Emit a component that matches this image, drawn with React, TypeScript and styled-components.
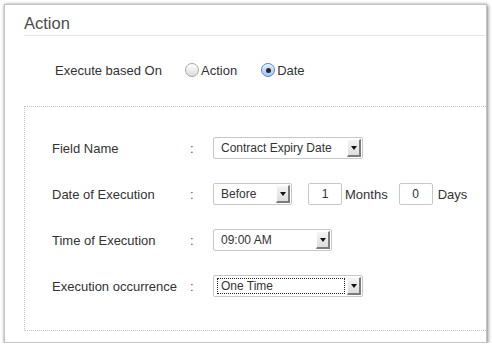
import React from 'react';
import styled, { createGlobalStyle } from 'styled-components';

const GlobalStyle = createGlobalStyle`
    body {
        margin: 0;
        background: #ffffff;
        font-family: "Liberation Sans", Arial, sans-serif;
    }
`;

const Card = styled.div`
    box-sizing: border-box;
    width: 483px;
    height: 339px;
    margin: 4px 0 0 4px;
    background: #fff;
    border: 1px solid #c4c4c4;
    box-shadow: 1px 1px 4px rgba(0, 0, 0, 0.45), 0 0 2px rgba(0, 0, 0, 0.2);
`;

const Header = styled.div`
    margin-left: 19px;
    padding: 8px 0 2px 0;
    line-height: 20px;
    font-size: 16.5px;
    color: #4d4d4d;
    border-bottom: 1px solid #e6e6e6;
`;

const BasedOnRow = styled.div`
    display: flex;
    align-items: center;
    height: 20px;
    margin: 24px 0 0 50px;
    font-size: 13px;
    color: #333;
`;

const BasedOnLabel = styled.span`
    width: 130px;
`;

const RadioGroup = styled.div`
    display: flex;
    align-items: center;
    gap: 24px;
`;

const RadioOption = styled.label`
    display: flex;
    align-items: center;
    gap: 2px;
`;

const RadioDot = styled.span<{ $checked?: boolean }>`
    box-sizing: border-box;
    width: 14px;
    height: 14px;
    border-radius: 50%;
    display: flex;
    align-items: center;
    justify-content: center;
    border: 1px solid ${(p) => (p.$checked ? '#4f86d4' : '#a6a6a6')};
    background: ${(p) =>
        p.$checked
            ? 'linear-gradient(#dbe9fb, #a9c9f2)'
            : 'linear-gradient(#ffffff, #dcdcdc)'};
    box-shadow: inset 0 1px 1px rgba(255, 255, 255, 0.8);

    &::after {
        content: '';
        display: ${(p) => (p.$checked ? 'block' : 'none')};
        width: 5px;
        height: 5px;
        border-radius: 50%;
        background: #1f2a3a;
    }
`;

const DetailsBox = styled.div`
    margin: 26px 0 0 19px;
    padding: 18px 0 21px 27px;
    border: 1px dotted #c6c6c6;
    border-right: none;
`;

const FieldRow = styled.div`
    display: grid;
    grid-template-columns: 136px 25px auto;
    align-items: center;
    height: 46px;
    font-size: 13px;
    color: #333;
`;

const Colon = styled.span`
    padding-left: 2px;
    color: #555;
`;

const Controls = styled.div`
    display: flex;
    align-items: center;
`;

const SelectBox = styled.div<{ $width: number }>`
    box-sizing: border-box;
    width: ${(p) => p.$width}px;
    height: 22px;
    display: flex;
    align-items: center;
    padding: 0 1px 0 3px;
    border: 1px solid #c8c8c8;
    border-radius: 2px;
    background: #fff;
`;

const SelectValue = styled.span<{ $focused?: boolean }>`
    flex: 1;
    height: 16px;
    line-height: 16px;
    padding-left: 4px;
    margin-right: 2px;
    font-size: 12px;
    color: #333;
    outline: ${(p) => (p.$focused ? '1px dotted #222' : 'none')};
    outline-offset: -1px;
    white-space: nowrap;
`;

const ArrowButton = styled.span`
    box-sizing: border-box;
    width: 14px;
    height: 18px;
    display: flex;
    align-items: center;
    justify-content: center;
    background: linear-gradient(#f4f4f4, #dedede);
    border-top: 1px solid #fff;
    border-left: 1px solid #fff;
    border-right: 2px solid #7c7c7c;
    border-bottom: 2px solid #7c7c7c;

    &::after {
        content: '';
        width: 0;
        height: 0;
        border-left: 3px solid transparent;
        border-right: 3px solid transparent;
        border-top: 4px solid #111;
    }
`;

const NumberInput = styled.input<{ $gap: number }>`
    box-sizing: border-box;
    width: 34px;
    height: 22px;
    margin: 0 3px 0 ${(p) => p.$gap}px;
    padding: 0;
    border: 1px solid #c8c8c8;
    border-radius: 2px;
    text-align: center;
    font-family: inherit;
    font-size: 12px;
    color: #333;
`;

const Unit = styled.span<{ $left?: number }>`
    margin-left: ${(p) => p.$left ?? 0}px;
`;

type SelectProps = { value: string; width: number; focused?: boolean };

const Select = ({ value, width, focused }: SelectProps) => (
    <SelectBox $width={width}>
        <SelectValue $focused={focused}>{value}</SelectValue>
        <ArrowButton />
    </SelectBox>
);

export default function App() {
    return (
        <>
            <GlobalStyle />
            <Card>
                <Header>Action</Header>
                <BasedOnRow>
                    <BasedOnLabel>Execute based On</BasedOnLabel>
                    <RadioGroup>
                        <RadioOption>
                            <RadioDot />
                            Action
                        </RadioOption>
                        <RadioOption>
                            <RadioDot $checked />
                            Date
                        </RadioOption>
                    </RadioGroup>
                </BasedOnRow>
                <DetailsBox>
                    <FieldRow>
                        <span>Field Name</span>
                        <Colon>:</Colon>
                        <Select value="Contract Expiry Date" width={150} />
                    </FieldRow>
                    <FieldRow>
                        <span>Date of Execution</span>
                        <Colon>:</Colon>
                        <Controls>
                            <Select value="Before" width={79} />
                            <NumberInput $gap={16} defaultValue="1" />
                            <Unit>Months</Unit>
                            <NumberInput $gap={11} defaultValue="0" />
                            <Unit $left={2}>Days</Unit>
                        </Controls>
                    </FieldRow>
                    <FieldRow>
                        <span>Time of Execution</span>
                        <Colon>:</Colon>
                        <Select value="09:00 AM" width={119} />
                    </FieldRow>
                    <FieldRow>
                        <span>Execution occurrence</span>
                        <Colon>:</Colon>
                        <Select value="One Time" width={150} focused />
                    </FieldRow>
                </DetailsBox>
            </Card>
        </>
    );
}
